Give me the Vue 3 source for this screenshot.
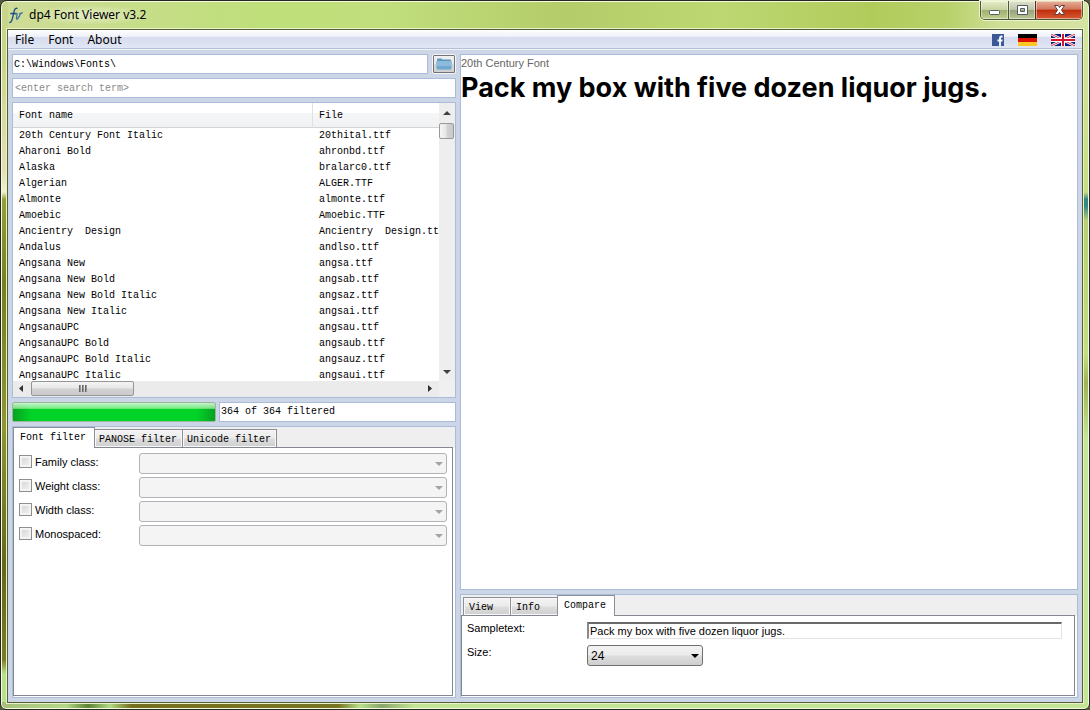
<script setup>
import { ref } from 'vue'

const menus = ['File', 'Font', 'About']
const path = ref('C:\\Windows\\Fonts\\')
const search = ref('')
const sample = ref('Pack my box with five dozen liquor jugs.')
const size = ref('24')
const fonts = [
  ['20th Century Font Italic', '20thital.ttf'],
  ['Aharoni Bold', 'ahronbd.ttf'],
  ['Alaska', 'bralarc0.ttf'],
  ['Algerian', 'ALGER.TTF'],
  ['Almonte', 'almonte.ttf'],
  ['Amoebic', 'Amoebic.TTF'],
  ['Ancientry  Design', 'Ancientry  Design.ttf'],
  ['Andalus', 'andlso.ttf'],
  ['Angsana New', 'angsa.ttf'],
  ['Angsana New Bold', 'angsab.ttf'],
  ['Angsana New Bold Italic', 'angsaz.ttf'],
  ['Angsana New Italic', 'angsai.ttf'],
  ['AngsanaUPC', 'angsau.ttf'],
  ['AngsanaUPC Bold', 'angsaub.ttf'],
  ['AngsanaUPC Bold Italic', 'angsauz.ttf'],
  ['AngsanaUPC Italic', 'angsaui.ttf']
]
const filterTabs = ['Font filter', 'PANOSE filter', 'Unicode filter']
const filters = ['Family class:', 'Weight class:', 'Width class:', 'Monospaced:']
const viewTabs = ['View', 'Info', 'Compare']
</script>

<template>
  <div class="window">
    <header class="titlebar">
      <svg class="app-icon" width="14" height="18" viewBox="0 0 14 18" aria-hidden="true">
        <path d="M.8 16.500C3 16.800 3.600 12 4.600 7.500C5.300 4 6 1.800 8 2.300M1.800 7.500H7" fill="none" stroke="#1d4f86" stroke-width="1.300" stroke-linecap="round" />
        <path d="M6.500 8C8 6.600 8.400 7.600 7.800 10C7 13.500 7.800 14 9.200 12C10.800 10 11.300 8 10.500 7C11.300 8.200 12.300 7.800 13.200 6.800" fill="none" stroke="#3f719f" stroke-width="1.300" stroke-linecap="round" />
      </svg>
      <h1 class="title">dp4 Font Viewer v3.2</h1>
      <div class="caption">
        <button class="cap min" aria-label="Minimize">
          <svg width="13" height="13" viewBox="0 0 13 13"><rect x="1.500" y="6.500" width="10" height="4" rx="1" fill="#fff" stroke="#555a66" /></svg>
        </button>
        <button class="cap max" aria-label="Maximize">
          <svg width="13" height="13" viewBox="0 0 13 13"><path fill-rule="evenodd" d="M1.500 1.500h10v9h-10zM4.500 4.500h4v3h-4z" fill="#fff" stroke="#555a66" /></svg>
        </button>
        <button class="cap close" aria-label="Close">
          <svg width="13" height="13" viewBox="0 0 13 13"><path d="M1.500 1.500h3.500l1.500 2 1.500-2h3.500l-3 4.500 3 4.500h-3.500l-1.500-2-1.500 2h-3.500l3-4.500z" fill="#fff" stroke="#5d3a42" /></svg>
        </button>
      </div>
    </header>

    <div class="client">
      <nav class="menubar">
        <button v-for="m in menus" :key="m" class="menu">{{ m }}</button>
        <div class="links">
          <a href="#facebook" aria-label="Facebook">
            <svg width="12" height="12" viewBox="0 0 12 12"><rect width="12" height="12" fill="#3b5998" /><path d="M10.500 2.500H9.500Q8 2.500 8 4V12M5.500 6.500H10.500" fill="none" stroke="#fff" stroke-width="1.800" /></svg>
          </a>
          <a href="#deutsch" aria-label="Deutsch">
            <svg width="19" height="12" viewBox="0 0 19 12"><rect width="19" height="4" /><rect y="4" width="19" height="4" fill="#dd1100" /><rect y="8" width="19" height="4" fill="#ffc726" /></svg>
          </a>
          <a href="#english" aria-label="English">
            <svg width="24" height="12" viewBox="0 0 24 12"><rect width="24" height="12" fill="#0c1c7c" /><path d="M0 0L24 12M24 0L0 12" stroke="#fff" stroke-width="2.600" /><path d="M0 0L24 12M24 0L0 12" stroke="#d5152e" stroke-width="0.900" /><path d="M12 0V12M0 6H24" stroke="#fff" stroke-width="4" /><path d="M12 0V12M0 6H24" stroke="#d5152e" stroke-width="2" /></svg>
          </a>
        </div>
      </nav>

      <main class="workspace">
        <section class="left">
          <div class="path-row">
            <input v-model="path" class="box" aria-label="Font folder" />
            <button class="browse" aria-label="Browse">
              <svg width="16" height="12" viewBox="0 0 16 12">
                <path d="M1 1.500Q1 .5 2 .5H5.500L6.500 1.500H14Q15 1.500 15 2.500V10Q15 11.500 14 11.500H2Q1 11.500 1 10Z" fill="#5b96bd" />
                <path d="M0 4Q0 3 1 3H15Q16 3 16 4L15.500 10.500Q15.500 11.500 14.500 11.500H1.500Q.5 11.500 .5 10.500Z" fill="#8dbbdc" />
                <path d="M.5 8H15.500L15.200 11H.8Z" fill="#70a8cf" />
              </svg>
            </button>
          </div>
          <input v-model="search" class="box search" placeholder="<enter search term>" aria-label="Search term" />

          <div class="list">
            <div class="rows">
              <table>
                <thead><tr><th class="name">Font name</th><th>File</th></tr></thead>
                <tbody>
                  <tr v-for="f in fonts" :key="f[1]"><td>{{ f[0] }}</td><td>{{ f[1] }}</td></tr>
                </tbody>
              </table>
            </div>
            <div class="vscroll">
              <svg width="8" height="4" viewBox="0 0 8 4"><path d="M4 0L8 4H0Z" fill="#404040" /></svg>
              <i class="vthumb"></i>
              <svg class="down" width="8" height="4" viewBox="0 0 8 4"><path d="M0 0H8L4 4Z" fill="#404040" /></svg>
            </div>
            <div class="hscroll">
              <svg width="4" height="7" viewBox="0 0 4 7"><path d="M4 0V7L0 3.500Z" fill="#303030" /></svg>
              <i class="hthumb"><b></b><b></b><b></b></i>
              <svg class="fwd" width="4" height="7" viewBox="0 0 4 7"><path d="M0 0V7L4 3.500Z" fill="#303030" /></svg>
            </div>
          </div>

          <div class="status-row">
            <div class="progress" role="progressbar" aria-label="Filtering" aria-valuenow="100"></div>
            <output class="box status">364 of 364 filtered</output>
          </div>

          <div class="panel">
            <div class="tabs" role="tablist">
              <button v-for="(t, i) in filterTabs" :key="t" class="tab" :class="{ active: i === 0 }" role="tab" :aria-selected="i === 0">{{ t }}</button>
            </div>
            <div class="page filter-page">
              <div v-for="f in filters" :key="f" class="filter">
                <label><input type="checkbox" />{{ f }}</label>
                <div class="combo off">
                  <select disabled :aria-label="f"></select>
                  <svg width="8" height="4" viewBox="0 0 8 4"><path d="M0 0H8L4 4Z" fill="#a3a3a3" /></svg>
                </div>
              </div>
            </div>
          </div>
        </section>

        <section class="right">
          <div class="preview">
            <h2>20th Century Font</h2>
            <p>{{ sample }}</p>
          </div>
          <div class="panel">
            <div class="tabs" role="tablist">
              <button v-for="(t, i) in viewTabs" :key="t" class="tab short" :class="{ active: i === 2 }" role="tab" :aria-selected="i === 2">{{ t }}</button>
            </div>
            <div class="page compare-page">
              <label for="sample">Sampletext:</label>
              <input id="sample" v-model="sample" class="sunken" />
              <label for="size">Size:</label>
              <div class="combo size">
                <select id="size" v-model="size"><option>24</option><option>36</option></select>
                <svg width="8" height="4" viewBox="0 0 8 4"><path d="M0 0H8L4 4Z" fill="#000" /></svg>
              </div>
            </div>
          </div>
        </section>
      </main>
    </div>
  </div>
</template>

<style>
html, body { margin: 0; background: #55583b; }
</style>

<style scoped>
.window, .window * { box-sizing: border-box; }
.window {
  height: 100vh;
  min-height: 480px;
  display: flex;
  flex-direction: column;
  padding: 0 6px 6px;
  border: 1px solid #24271d;
  border-radius: 7px 7px 6px 6px;
  box-shadow: inset 0 0 0 1px #f4f9df;
  font-family: "Liberation Sans", Arial, sans-serif;
  font-size: 11px;
  color: #000;
  background:
    linear-gradient(90deg, #a6bf7b, #b4d888 6%, #5b8434 8%, #b0db84 10%, #75701f 12%, #777523 31%, #b7e08c 33%, #8aa66a 35%, #c2e695 38%, #c2e695) bottom / 100% 7px no-repeat,
    linear-gradient(#c8d68c, #c8d68c 8%, #e6dfb3 24%, #edf3d1 27%, #94a03b 28%, #76801f 40%, #8f9634 60%, #656719 80%, #7e7a24 93%, #b8df8e 95%, #b8df8e) left / 7px 100% no-repeat,
    linear-gradient(#d5e5a5, #c7dd82 27%, #368883 28%, #368883 29%, #b8d073 31%, #c3de7c 50%, #a0b353 54%, #c4e797 62%, #c4e797) right / 7px 100% no-repeat,
    linear-gradient(90deg, #cfdc98, #bedf79 25%, #c1df7d 35%, #b4cc69 52%, #bdd873 66%, #b1cb5b 80%, #b8d16b 87%, #d0df98 92%, #d5e2a2);
}
.titlebar { display: flex; height: 28px; padding-left: 2px; align-items: center; }
.app-icon { flex: none; }
.title {
  margin: 0 0 0 5px;
  padding: 0 6px 0 1px;
  font: 400 12px/20px "Noto Sans", "Open Sans", sans-serif;
  background: radial-gradient(closest-side, rgba(255, 255, 255, .5), rgba(255, 255, 255, 0));
}
.caption {
  display: flex;
  align-self: flex-start;
  margin-left: auto;
  height: 19px;
  border: 1px solid #4e5738;
  border-top: 0;
  border-radius: 0 0 5px 5px;
  overflow: hidden;
  box-shadow: 0 0 0 1px #eef4d0;
}
.cap {
  display: flex;
  align-items: center;
  justify-content: center;
  padding: 0;
  border: 0;
  width: 27px;
  background: linear-gradient(#e6ecc9, #c7d3a0 48%, #9fae6c 50%, #c0d08c);
  box-shadow: inset 0 0 0 1px rgba(255, 255, 255, .45);
}
.max { border-left: 1px solid #4e5738; background: linear-gradient(#dde2ce, #bcc5a6 48%, #96a177 50%, #bac795); }
.close { width: 47px; border-left: 1px solid #5c2a1d; background: linear-gradient(#e5b19a, #d2755a 46%, #bf2d0b 50%, #d65a32); }

.client {
  flex: 1;
  min-height: 0;
  display: flex;
  flex-direction: column;
  border: 1px solid #566038;
  outline: 1px solid #eaf3c8;
  background: #ccd6e6;
}
.menubar {
  display: flex;
  align-items: center;
  flex: none;
  height: 20px;
  padding: 0 7px 0 0;
  border-bottom: 1px solid #f0f3fa;
  box-shadow: inset 0 -1px #b5bfd5;
  background: linear-gradient(#fff, #edf0f8 36%, #d7dcee 37%, #e2e7f6);
}
.menu {
  height: 18px;
  padding: 0 7px;
  border: 0;
  background: none;
  font: 12px/18px "Noto Sans", "Open Sans", sans-serif;
  color: #000;
}
.links { display: flex; gap: 14px; margin-left: auto; }
.links a, .links svg { display: block; }

.workspace {
  flex: 1;
  min-height: 0;
  display: grid;
  grid-template-columns: minmax(0, 444fr) minmax(0, 618fr);
  gap: 4px;
  padding: 4px;
}
.left, .right { display: grid; gap: 4px; min-height: 0; min-width: 0; }
.left { grid-template-rows: 20px 20px minmax(0, 296fr) 20px minmax(0, 272fr); }
.right { grid-template-rows: minmax(0, 1fr) 104px; }

.box, .list, .panel, .preview { border: 1px solid #a9bcd8; background: #fff; }
.box, .list, .tab { font-family: "Liberation Mono", "Courier New", monospace; font-size: 10px; color: #000; }
.box { display: block; width: 100%; min-width: 0; height: 20px; padding: 0 1px; border-radius: 0; outline: 0; line-height: 18px; }
.search { padding: 0 2px; }
.search::placeholder { color: #8a8a8a; opacity: 1; }
.path-row { display: flex; gap: 4px; }
.browse {
  display: flex;
  flex: none;
  align-items: center;
  justify-content: center;
  width: 24px;
  height: 20px;
  padding: 0;
  border: 1px solid #f4f4f4;
  border-radius: 2px;
  background: linear-gradient(#f2f2f2, #e8e8e8 50%, #d8d8d8 51%, #cfcfcf);
  box-shadow: inset 0 0 0 1px #70747a;
}

.list { display: grid; grid-template: minmax(0, 1fr) 16px / minmax(0, 1fr) 16px; background: #f0f0f0; }
.rows { overflow: hidden; background: #fff; }
table { width: 100%; border-collapse: separate; border-spacing: 0; table-layout: fixed; }
th, td { padding: 0 0 0 6px; text-align: left; font-weight: normal; line-height: 16px; white-space: pre; overflow: hidden; }
td { height: 16px; }
th { height: 25px; padding-top: 1px; border-bottom: 1px solid #d5d5d5; background: linear-gradient(#fff, #fff 42%, #f5f6f7 43%, #f1f2f4); }
.name { width: 300px; border-right: 1px solid #dfe1e4; }
.vscroll { display: flex; flex-direction: column; align-items: center; padding: 8px 1px 7px 0; background: #eee; }
.vthumb { width: 15px; height: 16px; margin-top: 8px; border: 1px solid #999; border-radius: 2px; background: linear-gradient(90deg, #f5f5f5, #e6e6e6 48%, #d3d3d3 52%, #c9c9c9); }
.down { margin-top: auto; }
.hscroll { display: flex; align-items: center; padding: 0 7px 2px 6px; background: #ebebeb; }
.hthumb {
  display: flex;
  align-items: center;
  justify-content: center;
  gap: 1px;
  width: 103px;
  height: 15px;
  margin-left: 8px;
  border: 1px solid #969696;
  border-radius: 2px;
  background: linear-gradient(#f4f4f4, #e7e7e7 48%, #d2d2d2 52%, #cbcbcb);
}
.hthumb b { width: 2px; height: 7px; background: linear-gradient(90deg, #555, #aaa); }
.fwd { margin-left: auto; }

.status-row { display: grid; grid-template-columns: minmax(0, 204fr) minmax(0, 237fr); gap: 3px; }
.progress {
  border: 1px solid #9ab79c;
  border-radius: 2px;
  background:
    linear-gradient(rgba(230, 255, 230, .85), rgba(170, 245, 170, .7) 30%, rgba(255, 255, 255, 0) 34%),
    linear-gradient(90deg, #08a122, #00d328 9%, #00d328 91%, #08a122);
}

.panel { display: flex; flex-direction: column; min-height: 0; background: #efefef; }
.tabs { display: flex; flex: none; align-items: flex-end; height: 20px; padding-left: 2px; }
.tab {
  height: 18px;
  padding: 2px 5px 0 4px;
  border: 1px solid #8c8e99;
  border-bottom: 0;
  background: linear-gradient(#f3f3f3, #ebebeb 48%, #dddddd 52%, #cfcfcf);
  box-shadow: inset 0 0 0 1px #f8f8f8;
  line-height: 15px;
  text-align: left;
}
.tab + .tab { border-left: 0; }
.tab.short { width: 48px; padding-left: 5px; }
.tab.active { z-index: 1; height: 21px; margin: 0 0 -1px; padding: 0 8px 2px 6px; border-left: 1px solid #8c8e99; background: #fff; box-shadow: none; }
.tab.active:first-child { margin-left: -2px; }
.tab.short.active { width: 58px; margin-left: -2px; }
.page { flex: 1; margin: 0 2px 1px 0; border: 1px solid #828790; background: #fff; box-shadow: 2px 1px #fff; }
.filter-page { display: flex; flex-direction: column; gap: 3px; padding: 5px; }
.filter { display: grid; grid-template-columns: 120px minmax(0, 1fr); height: 21px; }
.filter label { display: flex; align-items: center; gap: 3px; height: 18px; }
.filter input {
  appearance: none;
  width: 13px;
  height: 13px;
  margin: 0 0 1px;
  border: 1px solid #8e8f8f;
  background: linear-gradient(135deg, #cfd2d6, #f6f6f6);
  box-shadow: inset 0 0 0 2px #f4f4f4;
}
.combo { position: relative; height: 21px; }
.combo select {
  appearance: none;
  display: block;
  width: 100%;
  height: 21px;
  padding: 0 3px;
  border: 1px solid #707070;
  border-radius: 3px;
  background: linear-gradient(#f2f2f2, #ebebeb 48%, #dddddd 52%, #cfcfcf);
  font: 12px/18px "Liberation Sans", Arial, sans-serif;
  color: #000;
}
.combo.off select { border-color: #b0b2b6; background: #f4f4f4; opacity: 1; }
.combo svg { position: absolute; right: 4px; top: 9px; pointer-events: none; }
.compare-page {
  display: grid;
  grid-template: 24px 24px / 120px minmax(0, 1fr);
  padding: 5px 12px 5px 5px;
}
.compare-page label { line-height: 14px; }
.sunken {
  width: 100%;
  height: 17px;
  margin-top: 1px;
  padding: 0 1px;
  border: 1px solid #e3e3e3;
  border-top: 2px solid #696969;
  border-left: 2px solid #8a8a8a;
  border-radius: 0;
  outline: 0;
  font: 11px/14px "Liberation Sans", Arial, sans-serif;
}
.combo.size { width: 116px; }

.preview { overflow: hidden; }
.preview h2 { margin: 0; font: 11px/16px "Liberation Sans", Arial, sans-serif; color: #666; }
.preview p { margin: 0; font: 700 27px/34px Inter, "Liberation Sans", sans-serif; white-space: nowrap; }
</style>
